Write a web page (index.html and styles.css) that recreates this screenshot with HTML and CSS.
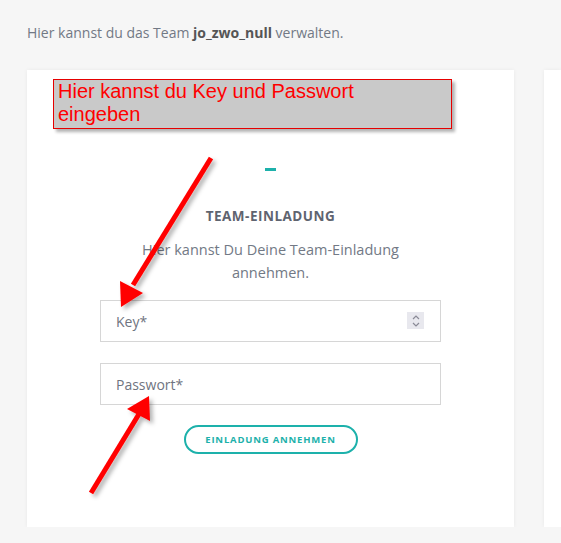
FILE: index.html
```html
<!DOCTYPE html>
<html lang="de">
<head>
  <meta charset="UTF-8" />
  <title>Team verwalten</title>
  <link rel="stylesheet" href="styles.css">
</head>
<body>
  <main class="page">
    <p class="intro">Hier kannst du das Team <strong>jo_zwo_null</strong> verwalten.</p>

    <div class="cards">
      <section class="card">
        <div class="note">Hier kannst du Key und Passwort<br>eingeben</div>

        <span class="dash"></span>
        <h2>TEAM-EINLADUNG</h2>
        <p class="desc">Hier kannst Du Deine Team-Einladung<br>annehmen.</p>

        <div class="field">
          <input type="text" placeholder="Key*" />
          <span class="spin">
            <svg width="10" height="14" viewBox="0 0 10 14"><path d="M2 5 L5 2 L8 5 M2 9 L5 12 L8 9" fill="none" stroke="#8a8a96" stroke-width="1.2"/></svg>
          </span>
        </div>
        <div class="field">
          <input type="password" placeholder="Passwort*" />
        </div>

        <button>EINLADUNG ANNEHMEN</button>

        <svg class="arrows" width="487" height="457" viewBox="0 0 487 457">
          <defs>
            <filter id="sh" x="-20%" y="-20%" width="140%" height="140%">
              <feDropShadow dx="3" dy="3" stdDeviation="2" flood-color="#000" flood-opacity="0.3"/>
            </filter>
          </defs>
          <g filter="url(#sh)" fill="#ff0000" stroke="#ff0000">
            <line x1="184" y1="88" x2="106" y2="215" stroke-width="5"/>
            <polygon points="94,237 93,211 116,223" stroke="none"/>
            <line x1="64" y1="423" x2="112" y2="344" stroke-width="5"/>
            <polygon points="122,326 123,351 100,339" stroke="none"/>
          </g>
        </svg>
      </section>

      <section class="card side"></section>
    </div>
  </main>
</body>
</html>
```

FILE: styles.css
```css
:root {
  --teal: #1db1ab;
  --text-grey: #727985;
  --line: #d6d6d6;
}

body {
  margin: 0;
  background: #f6f6f6;
  font-family: 'Open Sans', sans-serif;
  color: var(--text-grey);
  overflow: hidden;
}

.page {
  padding: 24px 0 0 27px;
  overflow: hidden;
}

.intro {
  margin: 0;
  font-size: 14px;
  line-height: 18px;
}

.intro strong {
  color: #555;
}

.cards {
  display: flex;
  gap: 30px;
  margin-top: 28px;
}

.card {
  position: relative;
  flex: 0 0 487px;
  height: 457px;
  box-sizing: border-box;
  background: white;
  box-shadow: 0 0 4px rgba(0,0,0,0.06);
  padding: 98px 73px 0;
  display: flex;
  flex-direction: column;
  align-items: center;
}

.card.side {
  flex: 1 1 auto;
  min-width: 0;
  padding: 0;
}

.note {
  position: absolute;
  left: 26px;
  top: 9px;
  width: 399px;
  height: 50px;
  background: #c9c9c9;
  border: 1px solid #e60000;
  box-shadow: 3px 3px 3px rgba(0,0,0,0.3);
  color: #ff0000;
  font-family: 'Liberation Sans', Arial, sans-serif;
  font-size: 20px;
  line-height: 23px;
  padding: 0 0 0 4px;
  box-sizing: border-box;
}

.dash {
  width: 11px;
  height: 3px;
  background: var(--teal);
}

h2 {
  margin: 37px 0 0;
  font-size: 13.5px;
  line-height: 16px;
  font-weight: 700;
  color: #5f6470;
  letter-spacing: 0.5px;
}

.desc {
  margin: 14px 0 0;
  font-size: 14.5px;
  line-height: 23px;
  text-align: center;
}

.field {
  position: relative;
  align-self: stretch;
  margin-top: 21px;
}

.desc + .field {
  margin-top: 16px;
}

.field input {
  width: 100%;
  height: 42px;
  box-sizing: border-box;
  border: 1px solid var(--line);
  padding: 0 15px;
  font-family: inherit;
  font-size: 14px;
  color: #555;
  outline: none;
}

.field input::placeholder {
  color: #6f7480;
}

.spin {
  position: absolute;
  right: 17px;
  top: 12px;
  width: 17px;
  height: 17px;
  background: #e8e8ee;
  display: flex;
  align-items: center;
  justify-content: center;
}

button {
  margin-top: 20px;
  width: 174px;
  height: 29px;
  border: 2px solid var(--teal);
  border-radius: 15px;
  background: white;
  color: var(--teal);
  font-family: inherit;
  font-size: 9.5px;
  font-weight: 700;
  letter-spacing: 0.8px;
  cursor: pointer;
}

.arrows {
  position: absolute;
  left: 0;
  top: 0;
  pointer-events: none;
}
```
